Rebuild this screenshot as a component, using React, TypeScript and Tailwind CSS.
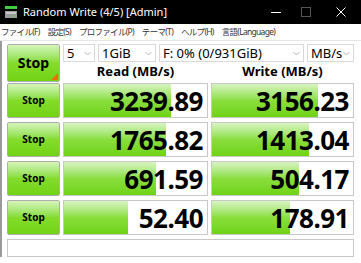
import React from "react";

const rows = [
  { read: "3239.89", readPct: 75, write: "3156.23", writePct: 75 },
  { read: "1765.82", readPct: 71, write: "1413.04", writePct: 69 },
  { read: "691.59", readPct: 64, write: "504.17", writePct: 62 },
  { read: "52.40", readPct: 45, write: "178.91", writePct: 55 },
];

const font = { fontFamily: '"Noto Sans", "Noto Sans CJK JP", sans-serif' };

function Chevron() {
  return (
    <svg width="7" height="5" viewBox="0 0 7 5" className="shrink-0">
      <path d="M0.5 1 L3.5 4 L6.5 1" fill="none" stroke="#b5b5b5" strokeWidth="1" />
    </svg>
  );
}

function Select({ label, className }: { label: string; className: string }) {
  return (
    <div className={`flex h-[18px] items-center justify-between border border-[#d9d9d9] bg-white pl-[3px] pr-[3px] text-[13px] leading-none text-black ${className}`}>
      <span>{label}</span>
      <Chevron />
    </div>
  );
}

function StopButton({ big }: { big?: boolean }) {
  return (
    <div className="relative flex h-full items-center justify-center rounded-[2px] border border-[#adadad] bg-gradient-to-b from-[#d6f5b8] via-[#84dc2a] to-[#72d314] p-px">
      <span className={big ? "text-[14px] font-bold text-black" : "text-[10px] font-bold text-black"}>Stop</span>
      {big && (
        <div className="absolute bottom-px right-px h-0 w-0 border-b-[7px] border-l-[7px] border-b-[#f26a10] border-l-transparent" />
      )}
    </div>
  );
}

function Bar({ value, pct }: { value: string; pct: number }) {
  return (
    <div className="relative h-full overflow-hidden border border-[#c8c8c8] bg-white">
      <div
        className="absolute inset-y-0 left-0 bg-gradient-to-b from-[#d8f4c0] via-[#8ade3c] to-[#6fd312]"
        style={{ width: `${pct}%` }}
      />
      <div className="relative flex h-full items-center justify-end pr-[4px] text-[26px] font-bold leading-none tracking-[-0.5px] text-black">
        {value}
      </div>
    </div>
  );
}

export default function App() {
  return (
    <div className="h-[263px] w-[361px] overflow-hidden bg-white" style={font}>
      {/* Title bar */}
      <div className="flex h-[24px] items-center bg-black text-white">
        <svg width="12" height="12" viewBox="0 0 12 12" className="ml-[5px]">
          <rect x="0" y="0" width="12" height="3" fill="#3fcf3f" />
          <rect x="0" y="5" width="12" height="7" fill="#9a9a9a" />
          <rect x="1" y="6" width="10" height="2" fill="#c8c8c8" />
          <circle cx="9.5" cy="10" r="0.8" fill="#3fcf3f" />
        </svg>
        <span className="ml-[6px] text-[11px]">Random Write (4/5) [Admin]</span>
        <div className="ml-auto flex items-center">
          <div className="flex w-[30px] justify-center">
            <div className="h-px w-[10px] bg-white" />
          </div>
          <div className="flex w-[30px] justify-center">
            <div className="h-[10px] w-[10px] border border-[#555]" />
          </div>
          <div className="flex w-[40px] justify-center">
            <svg width="10" height="10" viewBox="0 0 10 10">
              <path d="M0.5 0.5 L9.5 9.5 M9.5 0.5 L0.5 9.5" stroke="#fff" strokeWidth="1" />
            </svg>
          </div>
        </div>
      </div>

      {/* Menu */}
      <div className="flex h-[17px] items-center gap-[8px] whitespace-nowrap border-b border-[#e6e6e6] pl-[1px] text-[8.5px] leading-none tracking-[-0.7px] text-[#333]">
        <span>ファイル(F)</span>
        <span>設定(S)</span>
        <span>プロファイル(P)</span>
        <span>テーマ(T)</span>
        <span>ヘルプ(H)</span>
        <span>言語(Language)</span>
      </div>

      <div className="border-l-2 border-[#9a9a9a] pl-[5px] pt-[3px]">
        {/* Top row */}
        <div className="grid h-[37px] grid-cols-[53px_291px] gap-x-[3px]">
          <StopButton big />
          <div className="flex flex-col">
            <div className="flex gap-[3px]">
              <Select label="5" className="w-[32px]" />
              <Select label="1GiB" className="w-[58px]" />
              <Select label="F: 0% (0/931GiB)" className="w-[145px]" />
              <Select label="MB/s" className="w-[47px]" />
            </div>
            <div className="grid flex-1 grid-cols-[145px_143px] items-center gap-x-[3px] text-[13px] font-bold text-black">
              <div className="text-center">Read (MB/s)</div>
              <div className="text-center">Write (MB/s)</div>
            </div>
          </div>
        </div>

        {/* Results */}
        <div className="mt-[2px] flex flex-col gap-[4px]">
          {rows.map((r) => (
            <div key={r.read} className="grid h-[35px] grid-cols-[53px_145px_143px] gap-x-[3px]">
              <StopButton />
              <Bar value={r.read} pct={r.readPct} />
              <Bar value={r.write} pct={r.writePct} />
            </div>
          ))}
        </div>

        <div className="mt-[4px] h-[18px] w-[347px] border border-[#c8c8c8] bg-white" />
      </div>
    </div>
  );
}
